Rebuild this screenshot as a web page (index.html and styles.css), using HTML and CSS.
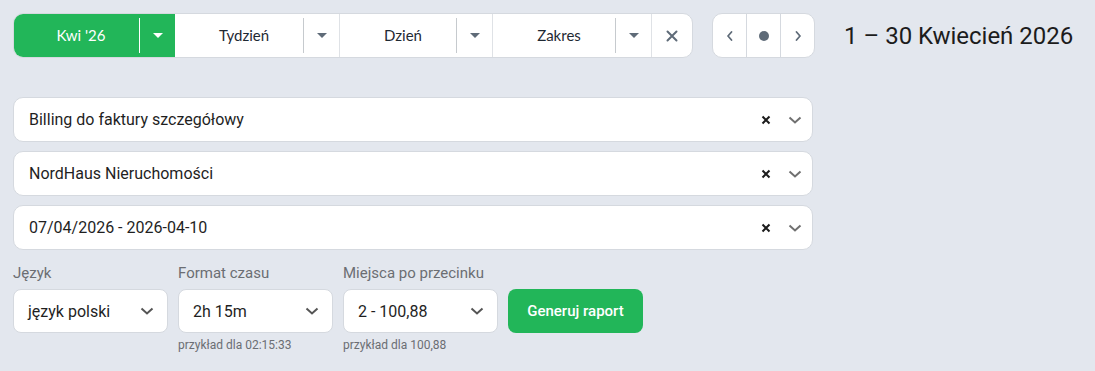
FILE: index.html
```html
<!DOCTYPE html>
<html lang="pl">
<head>
  <meta charset="UTF-8">
  <title>Raport</title>
  <link rel="stylesheet" href="styles.css">
</head>
<body>
  <div class="toolbar">
    <div class="period-bar">
      <div class="seg seg-active" style="width:162px">
        <span class="seg-label">Kwi '26</span>
        <span class="seg-caret"><span class="caret"></span></span>
      </div>
      <div class="seg" style="width:165px">
        <span class="seg-label">Tydzień</span>
        <span class="seg-caret"><span class="caret"></span></span>
      </div>
      <div class="seg" style="width:153px">
        <span class="seg-label">Dzień</span>
        <span class="seg-caret"><span class="caret"></span></span>
      </div>
      <div class="seg" style="width:159px">
        <span class="seg-label">Zakres</span>
        <span class="seg-caret"><span class="caret"></span></span>
      </div>
      <div class="seg-clear">
        <svg width="12" height="12" viewBox="0 0 12 12"><path d="M1.5 1.5l9 9M10.5 1.5l-9 9" stroke="#5f6b78" stroke-width="2" stroke-linecap="round"/></svg>
      </div>
    </div>

    <div class="nav-bar">
      <div class="nav-btn">
        <svg width="8" height="12" viewBox="0 0 8 12"><path d="M5.5 2L2 6l3.5 4" fill="none" stroke="#5f6b78" stroke-width="1.8" stroke-linecap="round" stroke-linejoin="round"/></svg>
      </div>
      <div class="nav-btn">
        <span class="dot"></span>
      </div>
      <div class="nav-btn">
        <svg width="8" height="12" viewBox="0 0 8 12"><path d="M2.5 2L6 6l-3.5 4" fill="none" stroke="#5f6b78" stroke-width="1.8" stroke-linecap="round" stroke-linejoin="round"/></svg>
      </div>
    </div>

    <h1 class="range-title">1 – 30 Kwiecień 2026</h1>
  </div>

  <div class="filters">
    <div class="select-row">
      <span class="select-value">Billing do faktury szczegółowy</span>
      <span class="clear-x">
        <svg width="10" height="10" viewBox="0 0 10 10"><path d="M1.5 1.5l7 7M8.5 1.5l-7 7" stroke="#1c1c1c" stroke-width="2"/></svg>
      </span>
      <span class="chevron">
        <svg width="14" height="8" viewBox="0 0 14 8"><path d="M1.5 1.5L7 6.5l5.5-5" fill="none" stroke="#707070" stroke-width="2"/></svg>
      </span>
    </div>
    <div class="select-row">
      <span class="select-value">NordHaus Nieruchomości</span>
      <span class="clear-x">
        <svg width="10" height="10" viewBox="0 0 10 10"><path d="M1.5 1.5l7 7M8.5 1.5l-7 7" stroke="#1c1c1c" stroke-width="2"/></svg>
      </span>
      <span class="chevron">
        <svg width="14" height="8" viewBox="0 0 14 8"><path d="M1.5 1.5L7 6.5l5.5-5" fill="none" stroke="#707070" stroke-width="2"/></svg>
      </span>
    </div>
    <div class="select-row">
      <span class="select-value">07/04/2026 - 2026-04-10</span>
      <span class="clear-x">
        <svg width="10" height="10" viewBox="0 0 10 10"><path d="M1.5 1.5l7 7M8.5 1.5l-7 7" stroke="#1c1c1c" stroke-width="2"/></svg>
      </span>
      <span class="chevron">
        <svg width="14" height="8" viewBox="0 0 14 8"><path d="M1.5 1.5L7 6.5l5.5-5" fill="none" stroke="#707070" stroke-width="2"/></svg>
      </span>
    </div>
  </div>

  <div class="options">
    <div class="field">
      <label class="field-label">Język</label>
      <div class="small-select">
        <span>język polski</span>
        <svg width="14" height="8" viewBox="0 0 14 8"><path d="M1.5 1.5L7 6.5l5.5-5" fill="none" stroke="#555" stroke-width="2"/></svg>
      </div>
    </div>
    <div class="field">
      <label class="field-label">Format czasu</label>
      <div class="small-select">
        <span>2h 15m</span>
        <svg width="14" height="8" viewBox="0 0 14 8"><path d="M1.5 1.5L7 6.5l5.5-5" fill="none" stroke="#555" stroke-width="2"/></svg>
      </div>
      <div class="hint">przykład dla 02:15:33</div>
    </div>
    <div class="field">
      <label class="field-label">Miejsca po przecinku</label>
      <div class="small-select">
        <span>2 - 100,88</span>
        <svg width="14" height="8" viewBox="0 0 14 8"><path d="M1.5 1.5L7 6.5l5.5-5" fill="none" stroke="#555" stroke-width="2"/></svg>
      </div>
      <div class="hint">przykład dla 100,88</div>
    </div>
    <button class="generate-btn">Generuj raport</button>
  </div>
</body>
</html>
```

FILE: styles.css
```css
body {
  margin: 0;
  padding: 13px;
  background-color: #e3e7ee;
  font-family: Roboto, "Liberation Sans", sans-serif;
  color: #1f1f1f;
}
.toolbar {
  display: flex;
  align-items: center;
  height: 45px;
}
.period-bar {
  display: flex;
  height: 43px;
  background-color: #fff;
  border: 1px solid #d5d9df;
  border-radius: 10px;
  overflow: hidden;
  font-family: Lato, "Liberation Sans", sans-serif;
  font-size: 15px;
  color: #1f2933;
}
.seg {
  display: flex;
  align-items: center;
  border-right: 1px solid #dfe2e6;
  box-sizing: border-box;
}
.seg-label {
  flex: 1;
  text-align: center;
  padding-left: 10px;
  border-right: 1px solid #c6cace;
  height: 35px;
  line-height: 35px;
}
.seg-caret {
  width: 35px;
  display: flex;
  justify-content: center;
}
.caret {
  width: 0;
  height: 0;
  border-left: 5px solid transparent;
  border-right: 5px solid transparent;
  border-top: 5px solid #5f6b78;
}
.seg-active {
  background-color: #22b659;
  color: #fff;
  margin: -1px 0 -1px -1px;
  height: 45px;
  border-right: none;
}
.seg-active .seg-label {
  border-right-color: #fff;
}
.seg-active .caret {
  border-top-color: #fff;
}
.seg-clear {
  width: 40px;
  display: flex;
  align-items: center;
  justify-content: center;
}
.nav-bar {
  display: flex;
  margin-left: 19px;
  height: 43px;
  background-color: #fff;
  border: 1px solid #d5d9df;
  border-radius: 10px;
  overflow: hidden;
}
.nav-btn {
  width: 33px;
  display: flex;
  align-items: center;
  justify-content: center;
  border-right: 1px solid #d5d9df;
}
.nav-btn:last-child {
  border-right: none;
}
.dot {
  width: 10px;
  height: 10px;
  border-radius: 50%;
  background-color: #5f6b78;
}
.range-title {
  margin: 0 0 0 29px;
  font-size: 24px;
  font-weight: 400;
  color: #1c1c1c;
}
.filters {
  margin-top: 39px;
  width: 800px;
  display: flex;
  flex-direction: column;
  gap: 9px;
}
.select-row {
  display: flex;
  align-items: center;
  height: 43px;
  background-color: #fff;
  border: 1px solid #d5d9df;
  border-radius: 10px;
  padding: 0 10px 0 15px;
  font-size: 16px;
}
.select-value {
  flex: 1;
}
.clear-x {
  display: flex;
  margin-right: 17px;
}
.chevron {
  display: flex;
}
.options {
  display: flex;
  align-items: flex-start;
  gap: 10px;
  margin-top: 14px;
}
.field {
  display: flex;
  flex-direction: column;
  width: 155px;
}
.field-label {
  font-size: 15px;
  color: #6b6e73;
  height: 25px;
}
.small-select {
  display: flex;
  align-items: center;
  justify-content: space-between;
  height: 42px;
  background-color: #fff;
  border: 1px solid #d5d9df;
  border-radius: 8px;
  padding: 0 13px 0 14px;
  font-size: 16px;
}
.hint {
  margin-top: 5px;
  font-size: 12px;
  color: #6b6e73;
}
.generate-btn {
  margin-top: 25px;
  width: 135px;
  height: 44px;
  border: none;
  border-radius: 8px;
  background-color: #22b659;
  color: #fff;
  font-family: Roboto, "Liberation Sans", sans-serif;
  font-size: 15px;
  font-weight: 500;
}
```
